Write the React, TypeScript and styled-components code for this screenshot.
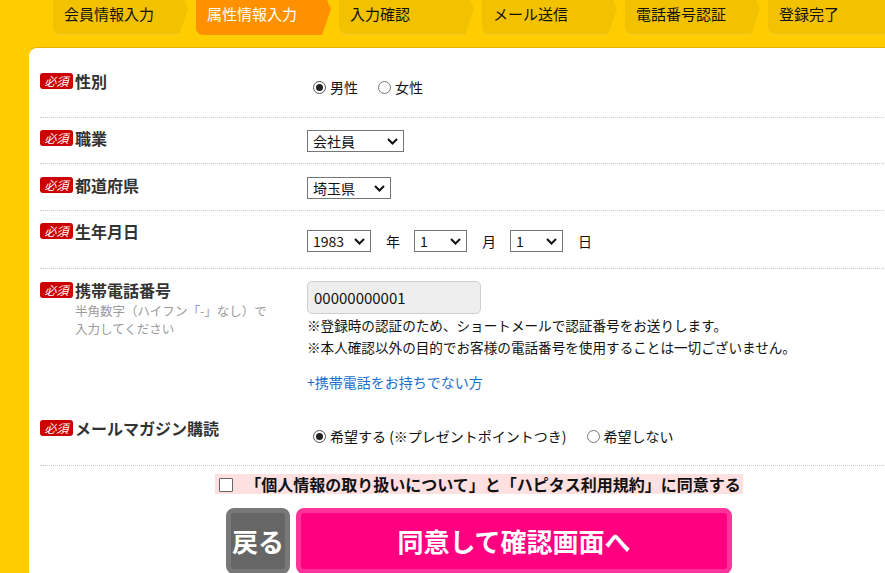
import React from "react";
import styled, { createGlobalStyle } from "styled-components";

const Global = createGlobalStyle`
  html, body { margin: 0; padding: 0; overflow: hidden; background: #ffcc00; }
  body { font-family: "Noto Sans CJK JP", "Noto Sans", sans-serif; color: #222; }
  * { box-sizing: border-box; }
`;

const Page = styled.div`
  width: 100vw;
  height: 100vh;
  overflow: hidden;
  padding-left: 29px;
`;

const Tabs = styled.nav`
  display: flex;
  gap: 8px;
  padding-left: 24px;
  height: 35px;
`;

const Tab = styled.div<{ $active?: boolean }>`
  flex: 0 0 135px;
  height: 35px;
  padding: 4px 0 0 11px;
  font-size: 15px;
  line-height: 20px;
  white-space: nowrap;
  background: ${(p) => (p.$active ? "#ff9100" : "#f2c200")};
  color: ${(p) => (p.$active ? "#fff" : "#111")};
  border-radius: 0 0 7px 7px;
  box-shadow: ${(p) => (p.$active ? "none" : "inset 0 -1px 0 #f6cf2a")};
  clip-path: polygon(0 0, calc(100% - 4px) 0, 100% 9px, calc(100% - 9px) 100%, 0 100%);
`;

const Panel = styled.main`
  margin-top: 13px;
  width: 900px;
  background: #fff;
  border-radius: 8px 0 0 0;
  padding: 0 11px 20px;
  box-shadow: 0 -1px 0 #e2b300;
`;

const Row = styled.section<{ $pb: number; $line?: boolean }>`
  display: grid;
  grid-template-columns: 267px 1fr;
  padding-bottom: ${(p) => p.$pb}px;
  border-bottom: ${(p) => (p.$line ? "1px dotted #c8c8c8" : "none")};
`;

const LabelCell = styled.div<{ $top: number }>`
  padding-top: ${(p) => p.$top}px;
`;

const Label = styled.div`
  display: flex;
  align-items: center;
  gap: 2px;
  font-size: 16px;
  font-weight: bold;
  line-height: 20px;
  color: #333;
`;

const Badge = styled.span`
  display: inline-block;
  width: 33px;
  height: 16px;
  border-radius: 3px;
  background: #cc0000;
  color: #fff;
  font-size: 12px;
  font-weight: normal;
  font-style: italic;
  line-height: 16px;
  text-align: center;
`;

const Hint = styled.div`
  margin: 2px 0 0 35px;
  font-size: 12.5px;
  line-height: 18px;
  color: #9a9a9a;
`;

const ValueCell = styled.div<{ $top: number }>`
  padding-top: ${(p) => p.$top}px;
  font-size: 14px;
  line-height: 20px;
  color: #111;
`;

const RadioGroup = styled.div`
  display: flex;
  align-items: center;
  height: 20px;
  margin-left: 6px;
`;

const RadioItem = styled.label`
  display: flex;
  align-items: center;
  gap: 4px;
  margin-right: 20px;
  font-size: 14px;
  white-space: nowrap;
`;

const RadioCircle = styled.span<{ $checked?: boolean }>`
  display: grid;
  place-items: center;
  width: 13px;
  height: 13px;
  border-radius: 50%;
  border: 1px solid ${(p) => (p.$checked ? "#555" : "#777")};
  background: #fff;
`;

const RadioDot = styled.span`
  width: 7px;
  height: 7px;
  border-radius: 50%;
  background: #222;
`;

const SelectBox = styled.div<{ $w: number }>`
  display: inline-flex;
  align-items: center;
  justify-content: space-between;
  width: ${(p) => p.$w}px;
  height: 22px;
  padding: 0 5px 0 5px;
  border: 1px solid #767676;
  background: #fff;
  font-size: 14px;
  line-height: 20px;
  color: #111;
`;

const DateLine = styled.div`
  display: flex;
  align-items: center;
`;

const Unit = styled.span`
  margin: 0 14px 0 15px;
  font-size: 14px;
`;

const PhoneInput = styled.div`
  width: 174px;
  height: 33px;
  padding: 0 6px;
  border: 1px solid #cfcfcf;
  border-radius: 5px;
  background: #eeeeee;
  font-size: 15px;
  line-height: 31px;
  color: #111;
`;

const Note = styled.p`
  margin: 0;
  font-size: 13.6px;
  line-height: 22px;
  white-space: nowrap;
`;

const MoreLink = styled.a`
  display: block;
  margin-top: 13px;
  font-size: 14px;
  line-height: 22px;
  color: #1a6fcc;
  text-decoration: none;
`;

const Agree = styled.div`
  display: flex;
  justify-content: center;
  margin-top: 8px;
`;

const AgreeBox = styled.label`
  display: flex;
  align-items: center;
  height: 20px;
  padding: 0 2px 0 4px;
  background: #ffe0e0;
`;

const CheckBox = styled.span`
  width: 14px;
  height: 14px;
  margin-right: 12px;
  margin-top: 2px;
  border: 1px solid #666;
  border-radius: 1px;
  background: #fff;
`;

const AgreeText = styled.span`
  font-size: 16px;
  font-weight: bold;
  line-height: 20px;
  color: #111;
  white-space: nowrap;
`;

const Buttons = styled.div`
  display: flex;
  justify-content: center;
  gap: 6px;
  margin-top: 14px;
`;

const Button = styled.button<{ $kind: "back" | "next"; $w: number }>`
  width: ${(p) => p.$w}px;
  height: 66px;
  padding: 0;
  border: 5px solid ${(p) => (p.$kind === "back" ? "#787878" : "#ff3399")};
  border-radius: 8px;
  background: ${(p) => (p.$kind === "back" ? "#666666" : "#ff0080")};
  color: #fff;
  font-family: "Noto Sans CJK JP", "Noto Sans", sans-serif;
  font-size: 26px;
  font-weight: bold;
  line-height: 1;
  white-space: nowrap;
`;

const Chevron = () => (
  <svg width="11" height="7" viewBox="0 0 11 7">
    <polyline points="1,1 5.5,5.5 10,1" fill="none" stroke="#111" strokeWidth="2" />
  </svg>
);

const Select = ({ w, value }: { w: number; value: string }) => (
  <SelectBox $w={w}>
    <span>{value}</span>
    <Chevron />
  </SelectBox>
);

const Radio = ({ checked, label }: { checked?: boolean; label: string }) => (
  <RadioItem>
    <RadioCircle $checked={checked}>{checked && <RadioDot />}</RadioCircle>
    {label}
  </RadioItem>
);

const Required = ({ children }: { children: React.ReactNode }) => (
  <Label>
    <Badge>必須</Badge>
    {children}
  </Label>
);

const steps = ["会員情報入力", "属性情報入力", "入力確認", "メール送信", "電話番号認証", "登録完了"];

export default function App() {
  return (
    <>
      <Global />
      <Page>
        <Tabs>
          {steps.map((s, i) => (
            <Tab key={s} $active={i === 1}>
              {s}
            </Tab>
          ))}
        </Tabs>
        <Panel>
          <Row $pb={20} $line>
            <LabelCell $top={23}>
              <Required>性別</Required>
            </LabelCell>
            <ValueCell $top={29}>
              <RadioGroup>
                <Radio checked label="男性" />
                <Radio label="女性" />
              </RadioGroup>
            </ValueCell>
          </Row>
          <Row $pb={11} $line>
            <LabelCell $top={10}>
              <Required>職業</Required>
            </LabelCell>
            <ValueCell $top={12}>
              <Select w={97} value="会社員" />
            </ValueCell>
          </Row>
          <Row $pb={11} $line>
            <LabelCell $top={11}>
              <Required>都道府県</Required>
            </LabelCell>
            <ValueCell $top={13}>
              <Select w={84} value="埼玉県" />
            </ValueCell>
          </Row>
          <Row $pb={16} $line>
            <LabelCell $top={10}>
              <Required>生年月日</Required>
            </LabelCell>
            <ValueCell $top={19}>
              <DateLine>
                <Select w={64} value="1983" />
                <Unit>年</Unit>
                <Select w={53} value="1" />
                <Unit>月</Unit>
                <Select w={53} value="1" />
                <Unit>日</Unit>
              </DateLine>
            </ValueCell>
          </Row>
          <Row $pb={0}>
            <LabelCell $top={11}>
              <Required>携帯電話番号</Required>
              <Hint>
                半角数字（ハイフン「-」なし）で
                <br />
                入力してください
              </Hint>
            </LabelCell>
            <ValueCell $top={12}>
              <PhoneInput>00000000001</PhoneInput>
              <Note>※登録時の認証のため、ショートメールで認証番号をお送りします。</Note>
              <Note>※本人確認以外の目的でお客様の電話番号を使用することは一切ございません。</Note>
              <MoreLink href="#">+携帯電話をお持ちでない方</MoreLink>
            </ValueCell>
          </Row>
          <Row $pb={19} $line>
            <LabelCell $top={25}>
              <Required>メールマガジン購読</Required>
            </LabelCell>
            <ValueCell $top={33}>
              <RadioGroup>
                <Radio checked label="希望する (※プレゼントポイントつき)" />
                <Radio label="希望しない" />
              </RadioGroup>
            </ValueCell>
          </Row>
          <Agree>
            <AgreeBox>
              <CheckBox />
              <AgreeText>「個人情報の取り扱いについて」と「ハピタス利用規約」に同意する</AgreeText>
            </AgreeBox>
          </Agree>
          <Buttons>
            <Button $kind="back" $w={64}>戻る</Button>
            <Button $kind="next" $w={436}>同意して確認画面へ</Button>
          </Buttons>
        </Panel>
      </Page>
    </>
  );
}
